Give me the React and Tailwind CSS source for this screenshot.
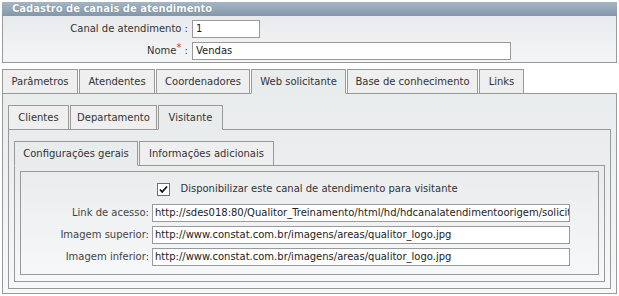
import React from 'react';

const font = { fontFamily: '"DejaVu Sans", Verdana, sans-serif' };

// Generic tab strip: the active tab covers the panel's top border
const TabStrip = ({ tabs, active }) => (
    <div className="relative z-10 flex -mb-px">
        {tabs.map((t, i) => (
            <div
                key={t.label}
                className={
                    'h-[25px] shrink-0 flex items-center justify-center border border-[#999] text-[#333] whitespace-nowrap ' +
                    (i > 0 ? 'ml-px ' : '') +
                    (i === active ? 'bg-[#e9eced] border-b-[#e9eced]' : 'bg-[#efefef]')
                }
                style={{ width: t.w }}
            >
                {t.label}
            </div>
        ))}
    </div>
);

const Field = ({ label, value, w }) => (
    <div className="flex items-center h-[18px]">
        <div className="w-[131px] text-right pr-[3px] text-[#444]">{label}</div>
        <div
            className="h-[18px] border border-[#9a9a9a] bg-white px-[2px] flex items-center overflow-hidden whitespace-nowrap text-[#222]"
            style={{ width: w }}
        >
            {value}
        </div>
    </div>
);

export default function App() {
    return (
        <div className="w-[619px] h-[296px] bg-white pl-[2px] pt-[2px] text-[10px] leading-none" style={font}>
            <div className="w-[615px]">
                {/* Title bar */}
                <div className="h-[14px] bg-gradient-to-b from-[#a6b5c4] to-[#8497a9] px-[10px] flex items-center text-white font-bold [text-shadow:0_0_1px_#51606f]">
                    Cadastro de canais de atendimento
                </div>

                {/* Top form */}
                <div className="h-[47px] border border-t-0 border-[#999] bg-gradient-to-b from-[#e8ebed] to-[#f4f5f6] pt-[4px] flex flex-col gap-[4px]">
                    <div className="flex items-center h-[18px]">
                        <div className="w-[189px] text-right pr-[4px] text-[#333]">Canal de atendimento :</div>
                        <div className="w-[68px] h-[18px] border border-[#9a9a9a] bg-white px-[3px] flex items-center text-[#222]">1</div>
                    </div>
                    <div className="flex items-center h-[18px]">
                        <div className="w-[189px] text-right pr-[4px] text-[#333]">
                            Nome<span className="text-[#e03030] relative -top-[3px]">*</span> :
                        </div>
                        <div className="w-[319px] h-[18px] border border-[#9a9a9a] bg-white px-[3px] flex items-center text-[#222]">Vendas</div>
                    </div>
                </div>

                {/* Level 1 tabs */}
                <div className="mt-[6px]">
                    <TabStrip
                        active={3}
                        tabs={[
                            { label: 'Parâmetros', w: 76 },
                            { label: 'Atendentes', w: 76 },
                            { label: 'Coordenadores', w: 94 },
                            { label: 'Web solicitante', w: 95 },
                            { label: 'Base de conhecimento', w: 131 },
                            { label: 'Links', w: 45 },
                        ]}
                    />
                    <div className="h-[201px] border border-[#999] bg-gradient-to-b from-[#e9eced] to-[#f7f8f9] pl-[5px] pr-[5px] pt-[11px]">
                        {/* Level 2 tabs */}
                        <TabStrip
                            active={2}
                            tabs={[
                                { label: 'Clientes', w: 61 },
                                { label: 'Departamento', w: 87 },
                                { label: 'Visitante', w: 65 },
                            ]}
                        />
                        <div className="h-[160px] border border-[#999] bg-gradient-to-b from-[#e9eced] to-[#f7f8f9] px-[5px] pt-[11px]">
                            {/* Level 3 tabs */}
                            <TabStrip
                                active={0}
                                tabs={[
                                    { label: 'Configurações gerais', w: 124 },
                                    { label: 'Informações adicionais', w: 135 },
                                ]}
                            />
                            <div className="h-[117px] border border-[#999] bg-gradient-to-b from-[#e9eced] to-[#f7f8f9] p-[5px]">
                                <div className="h-[104px] border border-[#999] pt-[10px] flex flex-col">
                                    <div className="flex items-center justify-center h-[14px] pr-[4px]">
                                        <svg width="13" height="13" viewBox="0 0 13 13" className="mr-[10px]">
                                            <rect x="0.5" y="0.5" width="12" height="12" fill="#fff" stroke="#707070" />
                                            <path d="M3 6.5 L5.2 9 L10 3.5" fill="none" stroke="#111" strokeWidth="1.8" />
                                        </svg>
                                        <span className="text-[#333]">Disponibilizar este canal de atendimento para visitante</span>
                                    </div>
                                    <div className="mt-[8px] flex flex-col gap-[4px]">
                                        <Field
                                            label="Link de acesso:"
                                            w={418}
                                            value="http://sdes018:80/Qualitor_Treinamento/html/hd/hdcanalatendimentoorigem/solicitante.php"
                                        />
                                        <Field
                                            label="Imagem superior:"
                                            w={418}
                                            value="http://www.constat.com.br/imagens/areas/qualitor_logo.jpg"
                                        />
                                        <Field
                                            label="Imagem inferior:"
                                            w={418}
                                            value="http://www.constat.com.br/imagens/areas/qualitor_logo.jpg"
                                        />
                                    </div>
                                </div>
                            </div>
                        </div>
                    </div>
                </div>
            </div>
        </div>
    );
}
